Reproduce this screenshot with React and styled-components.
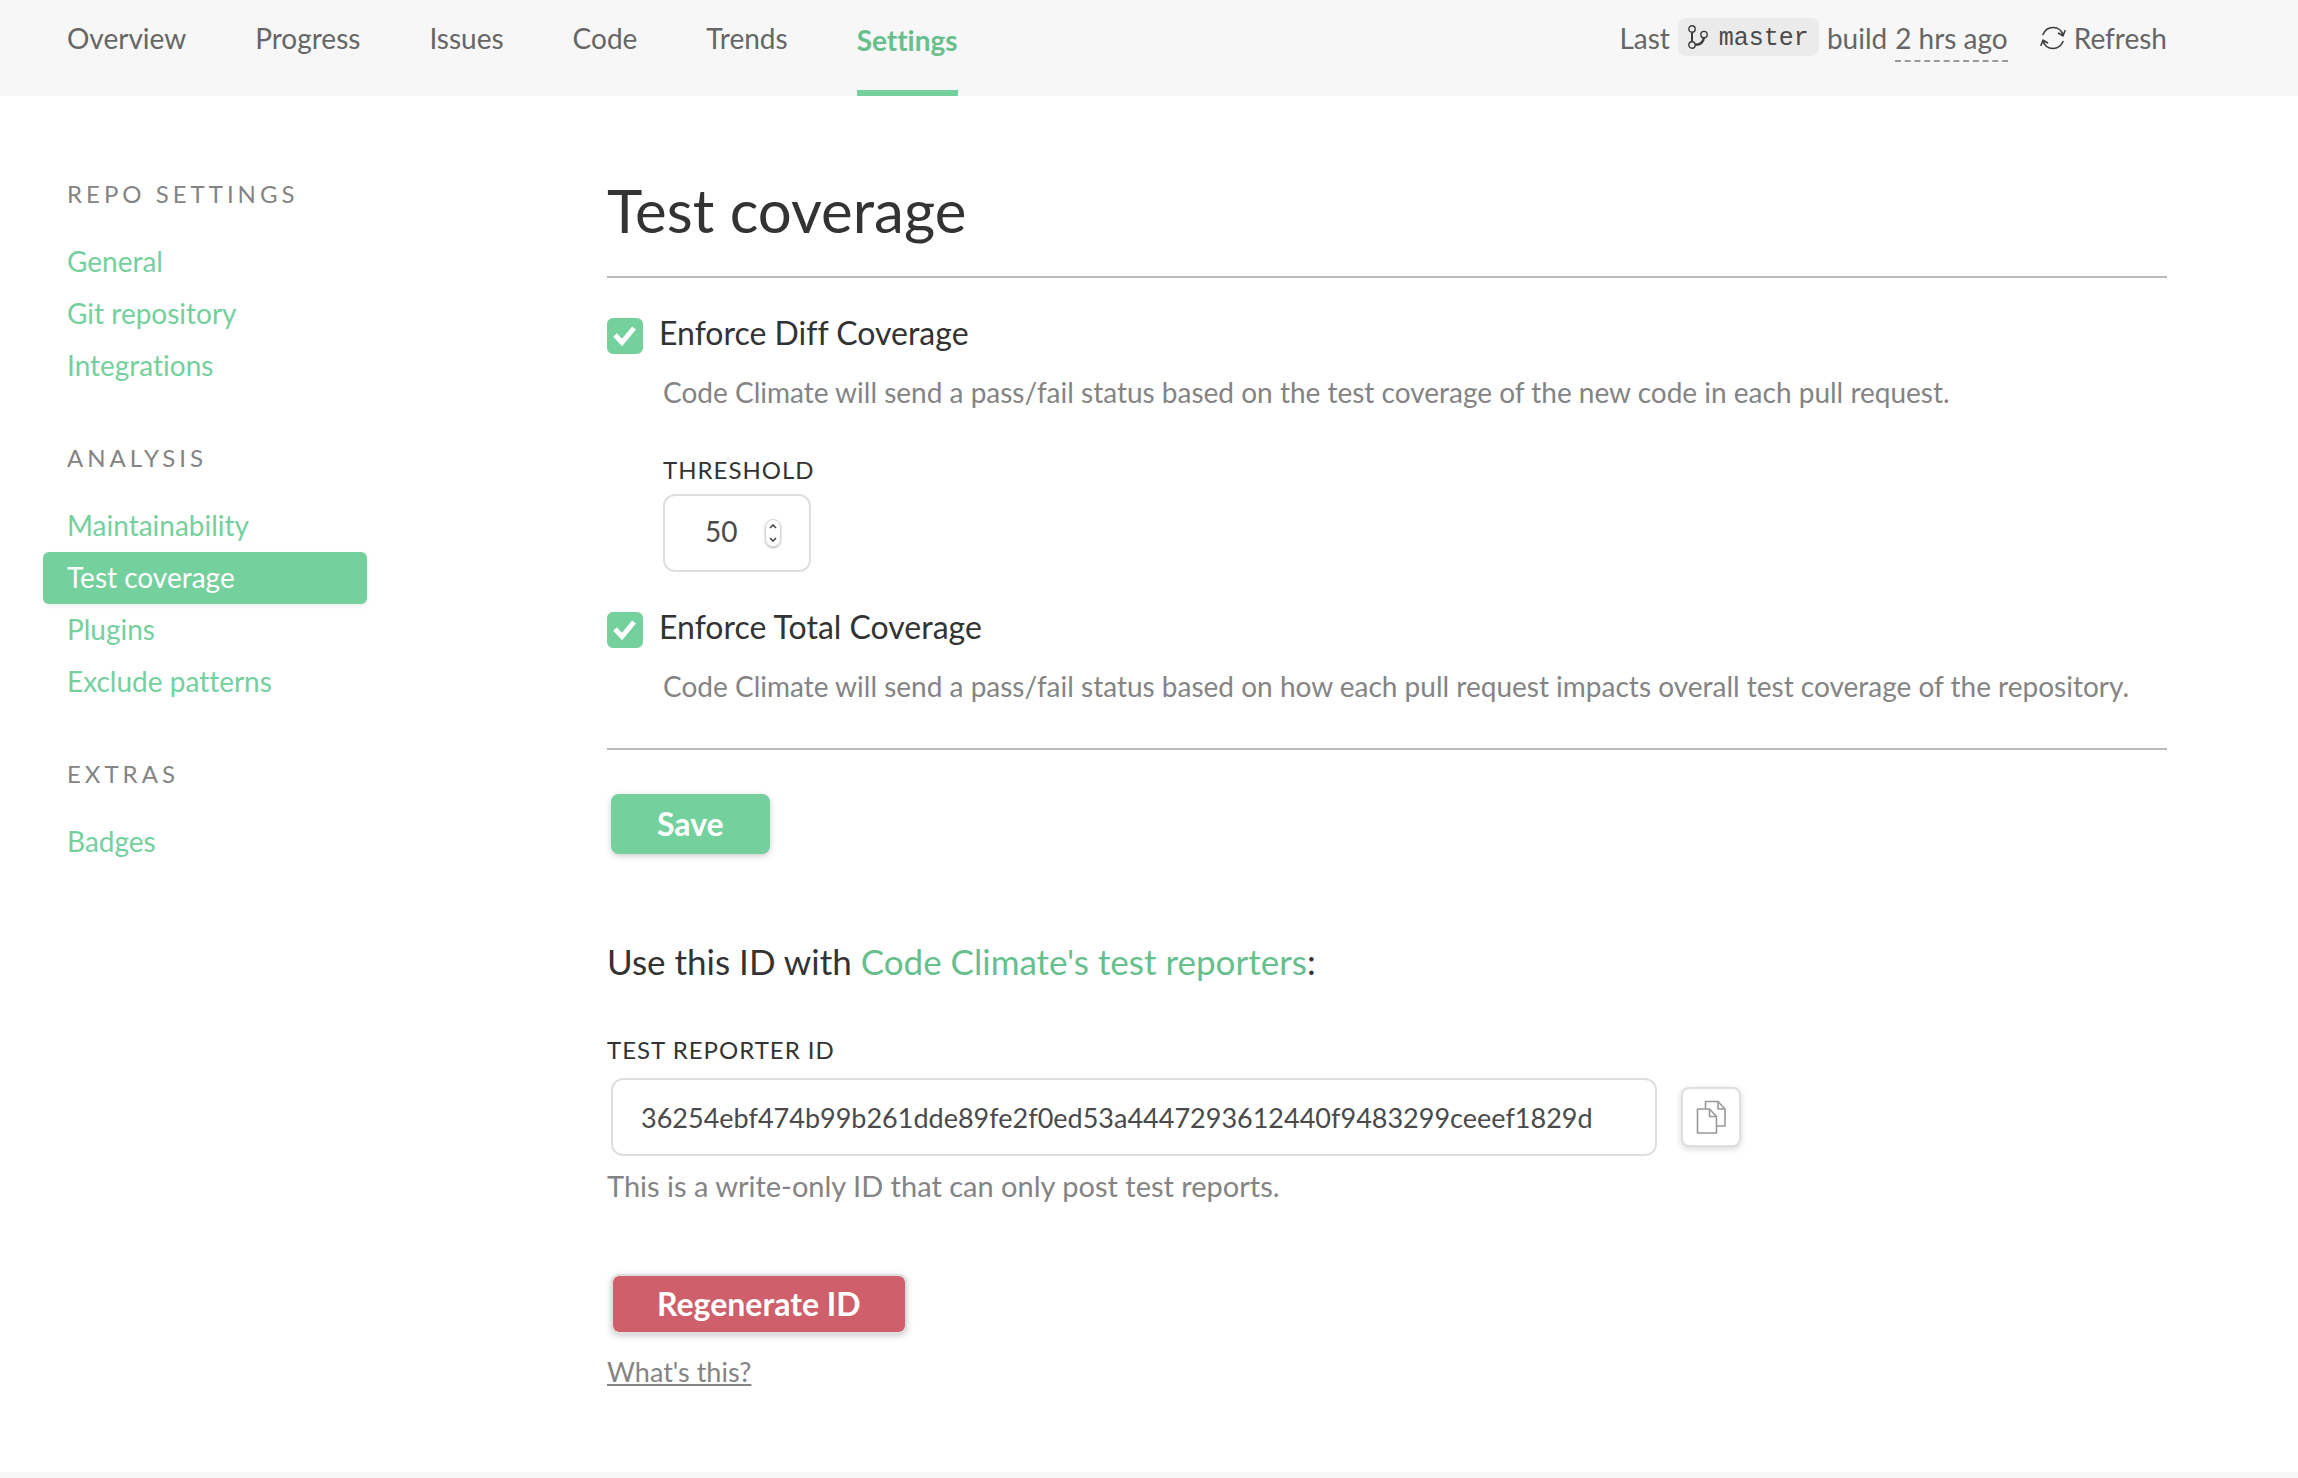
import React, { useState } from "react";
import styled, { createGlobalStyle, css } from "styled-components";

const color = {
  green: "#74d09d",
  greenDark: "#66bf8c",
  red: "#ce5f6b",
  ink: "#333333",
  body: "#4a4a4a",
  nav: "#666666",
  muted: "#848484",
  rule: "#b9b9b9",
  border: "#dfdfdf",
  strip: "#f7f7f7",
};

const GlobalStyle = createGlobalStyle`
  *, *::before, *::after { box-sizing: border-box; }
  body {
    margin: 0;
    background: #fff;
    color: ${color.ink};
    font-family: Lato, "Open Sans", sans-serif;
    font-size: 28px;
    font-variant-ligatures: none;
    line-height: 36px;
  }
  button, input { font: inherit; font-variant-ligatures: none; }
  a { text-decoration: none; }
`;

const Page = styled.div`
  display: flex;
  flex-direction: column;
  min-height: 100vh;
`;

const Header = styled.header`
  display: flex;
  justify-content: space-between;
  min-height: 96px;
  padding: 0 131px 0 67px;
  background: ${color.strip};
`;

const Nav = styled.nav`
  display: flex;
  gap: 69px;
`;

const NavLink = styled.a`
  padding-top: 20px;
  color: ${color.nav};
  ${({ $active }) =>
    $active &&
    css`
      padding-top: 22px;
      border-bottom: 6px solid ${color.green};
      color: ${color.greenDark};
      font-weight: 700;
    `}
`;

const Status = styled.div`
  display: flex;
  align-items: flex-start;
  gap: 8px;
  padding-top: 18px;
  color: ${color.nav};
  line-height: 40px;
  white-space: nowrap;
`;

const Branch = styled.code`
  display: flex;
  align-items: center;
  gap: 11px;
  height: 38px;
  padding: 0 10px;
  border-radius: 8px;
  background: #ebebeb;
  color: ${color.body};
  font-family: "Liberation Mono", monospace;
  font-size: 25px;
`;

const BranchName = styled.span`
  padding-top: 4px;
`;

const BuildTime = styled.time`
  padding-bottom: 2px;
  border-bottom: 2px dashed #999;
`;

const Refresh = styled.button`
  display: flex;
  align-items: center;
  gap: 8px;
  margin-left: 24px;
  padding: 0;
  border: 0;
  background: none;
  color: inherit;
  line-height: 40px;
  cursor: pointer;
`;

const Body = styled.div`
  display: flex;
  padding: 80px 131px 82px 43px;
`;

const Sidebar = styled.aside`
  flex: 0 0 324px;
  margin-right: 240px;
`;

const Group = styled.section`
  margin-bottom: 48px;
`;

const GroupTitle = styled.h2`
  margin: 0 0 24px 24px;
  color: ${color.muted};
  font-size: 24px;
  font-weight: 400;
  letter-spacing: 4px;
  line-height: 36px;
  text-transform: uppercase;
`;

const GroupLink = styled.a`
  display: block;
  padding: 7px 24px 9px;
  border-radius: 6px;
  color: ${({ $active }) => ($active ? "#fff" : color.green)};
  background: ${({ $active }) => ($active ? color.green : "transparent")};
  box-shadow: ${({ $active }) => ($active ? "0 2px 4px rgba(60, 90, 120, 0.1)" : "none")};
`;

const Main = styled.main`
  flex: 1;
  min-width: 0;
`;

const Title = styled.h1`
  margin: 0;
  padding-bottom: 32px;
  border-bottom: 2px solid ${color.rule};
  font-size: 60px;
  font-weight: 400;
  line-height: 68px;
`;

const Options = styled.div`
  display: flex;
  flex-direction: column;
  gap: 40px;
  padding: 40px 0 44px;
  border-bottom: 2px solid ${color.rule};
`;

const CheckLabel = styled.label`
  display: flex;
  align-items: flex-start;
  gap: 16px;
  font-size: 32px;
  line-height: 30px;
  cursor: pointer;
`;

const Check = styled.span`
  display: grid;
  width: 36px;
  height: 36px;

  & > * {
    grid-area: 1 / 1;
  }
`;

const CheckInput = styled.input`
  appearance: none;
  width: 36px;
  height: 36px;
  margin: 0;
  border: 2px solid ${color.border};
  border-radius: 6px;
  cursor: pointer;

  &:checked {
    border-color: ${color.green};
    background: ${color.green};
  }
`;

const CheckMark = styled.svg`
  pointer-events: none;
`;

const OptionBody = styled.div`
  padding: 20px 0 0 56px;
`;

const Description = styled.p`
  margin: 0;
  color: ${color.muted};
`;

const FieldLabel = styled.label`
  display: block;
  font-size: 24px;
  letter-spacing: 1px;
  line-height: 28px;
  text-transform: uppercase;
`;

const Threshold = styled.div`
  display: grid;
  justify-items: start;
  gap: 10px;
  margin-top: 46px;
`;

const NumberBox = styled.div`
  display: flex;
  align-items: center;
  gap: 24px;
  width: 148px;
  height: 78px;
  padding: 0 26px 0 40px;
  border: 2px solid ${color.border};
  border-radius: 12px;
`;

const NumberInput = styled.input`
  appearance: textfield;
  width: 36px;
  padding: 0 0 4px;
  border: 0;
  outline: 0;
  background: none;
  color: ${color.body};

  &::-webkit-inner-spin-button {
    appearance: none;
    margin: 0;
  }
`;

const Stepper = styled.div`
  display: flex;
  flex-direction: column;
  flex: none;
  width: 16px;
  height: 28px;
  border: 1px solid #d4d4d4;
  border-radius: 8px;
  box-shadow: 0 1px 2px rgba(0, 0, 0, 0.3);
`;

const Step = styled.button`
  display: flex;
  flex: 1;
  align-items: center;
  justify-content: center;
  padding: 0;
  border: 0;
  background: none;
  cursor: pointer;
`;

const SolidButton = styled.button`
  display: block;
  height: 60px;
  margin-left: 4px;
  padding: 0 ${({ $danger }) => ($danger ? "44px" : "46px")};
  border: ${({ $danger }) => ($danger ? `2px solid ${color.border}` : "0")};
  border-radius: 8px;
  background: ${({ $danger }) => ($danger ? color.red : color.green)};
  background-clip: padding-box;
  box-shadow: 0 2px 6px rgba(0, 0, 0, 0.2);
  color: #fff;
  font-size: 32px;
  font-weight: 700;
  cursor: pointer;
`;

const Actions = styled.div`
  padding: 44px 0 87px;
`;

const Lead = styled.h3`
  margin: 0 0 55px;
  font-size: 35px;
  font-weight: 400;
  line-height: 40px;
`;

const LeadLink = styled.a`
  color: ${color.greenDark};
`;

const ReporterRow = styled.div`
  display: flex;
  align-items: center;
  gap: 24px;
  margin: 14px 0 12px 4px;
`;

const ReporterInput = styled.input`
  flex: 0 1 1046px;
  min-width: 0;
  height: 78px;
  padding: 0 28px;
  border: 2px solid ${color.border};
  border-radius: 12px;
  color: ${color.body};
  font-size: 27px;
`;

const CopyButton = styled.button`
  display: flex;
  align-items: center;
  justify-content: center;
  flex: none;
  width: 60px;
  height: 60px;
  padding: 0;
  border: 2px solid ${color.border};
  border-radius: 8px;
  background: #fff;
  box-shadow: 0 2px 6px rgba(0, 0, 0, 0.16);
  cursor: pointer;
`;

const Hint = styled.p`
  margin: 0 0 70px;
  color: ${color.muted};
  font-size: 29px;
`;

const HelpLink = styled.a`
  display: inline-block;
  margin-top: 20px;
  color: ${color.muted};
  font-size: 27px;
  text-decoration: underline;
  text-decoration-thickness: 2px;
  text-underline-offset: 2px;
`;

const Footer = styled.footer`
  flex: 1;
  min-height: 4px;
  background: ${color.strip};
`;

const BranchIcon = () => (
  <svg width="20" height="24" viewBox="0 0 20 24" fill="none" stroke="#3c3c3c" strokeWidth="1.4" aria-hidden="true">
    <circle cx="4" cy="4" r="3.2" />
    <circle cx="4" cy="20" r="3.2" />
    <circle cx="16" cy="9.6" r="3.2" />
    <path d="M4 7.2v9.6" strokeWidth="2" />
    <path d="M15.8 12.8c-.4 4.4-3.4 6.8-8.800 7" strokeWidth="2.4" />
  </svg>
);

const RefreshIcon = () => (
  <svg width="26" height="24" viewBox="0 0 26 24" fill="none" stroke="#3c3c3c" strokeWidth="1.6" strokeLinecap="round" strokeLinejoin="round" aria-hidden="true">
    <path d="M3 8.5C5 3.8 8.800 1.5 13 1.5c5 0 9 3.2 10 8" />
    <path d="M18.6 7.2l4.4 2.6 2-5" />
    <path d="M23 15.5c-2 4.7-5.8 7-10 7-5 0-9-3.2-10-8" />
    <path d="M7.4 16.8L3 14.2l-2 5" />
  </svg>
);

const CopyIcon = () => (
  <svg width="30" height="34" viewBox="0 0 30 34" fill="none" stroke="#999" strokeWidth="1.6" strokeLinejoin="round" aria-hidden="true">
    <path d="M9.5 8.5V1.5h12.5l7 7.5v17h-8" />
    <path d="M22 1.5v7.5h7" />
    <path d="M1.5 9h12l7 7.5v16.5h-19z" />
    <path d="M13.5 9v7.5h7" />
  </svg>
);

const Chevron = ({ up }) => (
  <svg width="8" height="5" viewBox="0 0 8 5" fill="none" stroke="#444" strokeWidth="1.6" aria-hidden="true">
    <path d={up ? "M1 4l3-3 3 3" : "M1 1l3 3 3-3"} />
  </svg>
);

const navItems = ["Overview", "Progress", "Issues", "Code", "Trends", "Settings"];

const groups = [
  { title: "Repo settings", items: ["General", "Git repository", "Integrations"] },
  { title: "Analysis", items: ["Maintainability", "Test coverage", "Plugins", "Exclude patterns"] },
  { title: "Extras", items: ["Badges"] },
];

function Option({ label, description, children }) {
  return (
    <div>
      <CheckLabel>
        <Check>
          <CheckInput type="checkbox" defaultChecked />
          <CheckMark width="36" height="36" viewBox="0 0 36 36" fill="none" stroke="#fff" strokeWidth="5" aria-hidden="true">
            <path d="M8 17l7 7.5L27 10" />
          </CheckMark>
        </Check>
        {label}
      </CheckLabel>
      <OptionBody>
        <Description>{description}</Description>
        {children}
      </OptionBody>
    </div>
  );
}

export default function App() {
  const [threshold, setThreshold] = useState(50);

  return (
    <Page>
      <GlobalStyle />
      <Header>
        <Nav>
          {navItems.map((item) => (
            <NavLink key={item} href="#" $active={item === "Settings"}>
              {item}
            </NavLink>
          ))}
        </Nav>
        <Status>
          <span>Last</span>
          <Branch>
            <BranchIcon />
            <BranchName>master</BranchName>
          </Branch>
          <span>build</span>
          <BuildTime>2 hrs ago</BuildTime>
          <Refresh type="button">
            <RefreshIcon />
            Refresh
          </Refresh>
        </Status>
      </Header>

      <Body>
        <Sidebar>
          {groups.map((group) => (
            <Group key={group.title}>
              <GroupTitle>{group.title}</GroupTitle>
              {group.items.map((item) => (
                <GroupLink key={item} href="#" $active={item === "Test coverage"}>
                  {item}
                </GroupLink>
              ))}
            </Group>
          ))}
        </Sidebar>

        <Main>
          <Title>Test coverage</Title>
          <Options>
            <Option
              label="Enforce Diff Coverage"
              description="Code Climate will send a pass/fail status based on the test coverage of the new code in each pull request."
            >
              <Threshold>
                <FieldLabel htmlFor="threshold">Threshold</FieldLabel>
                <NumberBox>
                  <NumberInput
                    id="threshold"
                    type="number"
                    value={threshold}
                    onChange={(event) => setThreshold(Number(event.target.value))}
                  />
                  <Stepper>
                    <Step type="button" aria-label="Increase threshold" onClick={() => setThreshold(threshold + 1)}>
                      <Chevron up />
                    </Step>
                    <Step type="button" aria-label="Decrease threshold" onClick={() => setThreshold(threshold - 1)}>
                      <Chevron />
                    </Step>
                  </Stepper>
                </NumberBox>
              </Threshold>
            </Option>
            <Option
              label="Enforce Total Coverage"
              description="Code Climate will send a pass/fail status based on how each pull request impacts overall test coverage of the repository."
            />
          </Options>
          <Actions>
            <SolidButton type="button">Save</SolidButton>
          </Actions>

          <Lead>
            Use this ID with <LeadLink href="#">Code Climate's test reporters</LeadLink>:
          </Lead>
          <FieldLabel htmlFor="reporter-id">Test reporter ID</FieldLabel>
          <ReporterRow>
            <ReporterInput
              id="reporter-id"
              type="text"
              readOnly
              value="36254ebf474b99b261dde89fe2f0ed53a4447293612440f9483299ceeef1829d"
            />
            <CopyButton type="button" aria-label="Copy test reporter ID">
              <CopyIcon />
            </CopyButton>
          </ReporterRow>
          <Hint>This is a write-only ID that can only post test reports.</Hint>
          <SolidButton type="button" $danger>
            Regenerate ID
          </SolidButton>
          <HelpLink href="#">What's this?</HelpLink>
        </Main>
      </Body>
      <Footer />
    </Page>
  );
}
